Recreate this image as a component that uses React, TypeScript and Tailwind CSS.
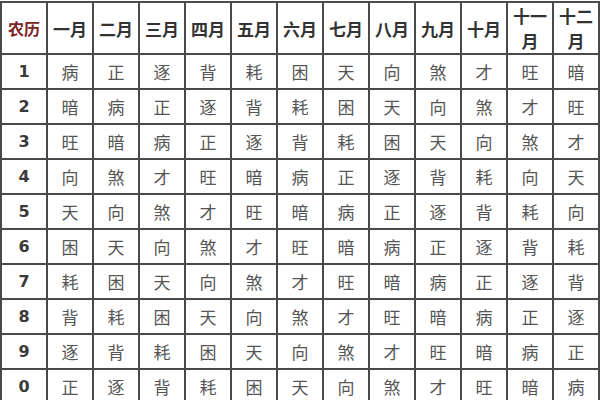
import React from "react";

const headers = ["一月", "二月", "三月", "四月", "五月", "六月", "七月", "八月", "九月", "十月", "十一月", "十二月"];

const rows: [string, string[]][] = [
  ["1", ["病", "正", "逐", "背", "耗", "困", "天", "向", "煞", "才", "旺", "暗"]],
  ["2", ["暗", "病", "正", "逐", "背", "耗", "困", "天", "向", "煞", "才", "旺"]],
  ["3", ["旺", "暗", "病", "正", "逐", "背", "耗", "困", "天", "向", "煞", "才"]],
  ["4", ["向", "煞", "才", "旺", "暗", "病", "正", "逐", "背", "耗", "向", "天"]],
  ["5", ["天", "向", "煞", "才", "旺", "暗", "病", "正", "逐", "背", "耗", "向"]],
  ["6", ["困", "天", "向", "煞", "才", "旺", "暗", "病", "正", "逐", "背", "耗"]],
  ["7", ["耗", "困", "天", "向", "煞", "才", "旺", "暗", "病", "正", "逐", "背"]],
  ["8", ["背", "耗", "困", "天", "向", "煞", "才", "旺", "暗", "病", "正", "逐"]],
  ["9", ["逐", "背", "耗", "困", "天", "向", "煞", "才", "旺", "暗", "病", "正"]],
  ["0", ["正", "逐", "背", "耗", "困", "天", "向", "煞", "才", "旺", "暗", "病"]],
];

export default function App() {
  return (
    <div className="w-[600px] h-[400px] overflow-hidden bg-white pt-[1px]">
      <table
        className="table-fixed border-collapse w-[598px] border-2 border-[#4a4a4a] text-center"
        style={{ fontFamily: '"Noto Sans CJK SC", "Noto Sans", sans-serif' }}
      >
        <colgroup>
          {Array.from({ length: 13 }).map((_, i) => (
            <col key={i} className="w-[46px]" />
          ))}
        </colgroup>
        <thead>
          <tr className="h-[52px]">
            <th className="border-2 border-[#4a4a4a] p-0 text-[16px] font-semibold text-[#7b2323] leading-[25px]">农历</th>
            {headers.map((h) => (
              <th key={h} className="border-2 border-[#4a4a4a] px-[2px] py-0 text-[17px] font-semibold text-[#333333] leading-[25px]">
                {h}
              </th>
            ))}
          </tr>
        </thead>
        <tbody>
          {rows.map(([n, cells]) => (
            <tr key={n} className="h-[35px]">
              <td
                className="border-2 border-[#4a4a4a] p-0 text-[16px] font-bold text-[#3a3a3a]"
                style={{ fontFamily: '"DejaVu Sans", sans-serif' }}
              >
                {n}
              </td>
              {cells.map((c, i) => (
                <td key={i} className="border-2 border-[#4a4a4a] p-0 text-[17px] text-[#555555]">
                  {c}
                </td>
              ))}
            </tr>
          ))}
        </tbody>
      </table>
    </div>
  );
}
